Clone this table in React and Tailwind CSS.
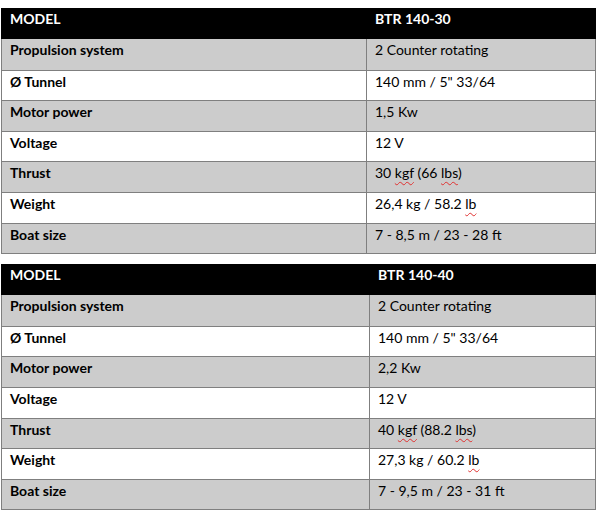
import React from 'react'

const Squiggle = ({ children }) => (
  <span className="underline decoration-wavy decoration-[#e0302f] decoration-1 underline-offset-[3px]">
    {children}
  </span>
)

const tables = [
  {
    model: 'BTR 140-30',
    col: 'grid-cols-[364px_1fr]',
    rows: [
      ['Propulsion system', '2 Counter rotating'],
      ['Ø Tunnel', '140 mm / 5" 33/64'],
      ['Motor power', '1,5 Kw'],
      ['Voltage', '12 V'],
      ['Thrust', <>30 <Squiggle>kgf</Squiggle> (66 <Squiggle>lbs</Squiggle>)</>],
      ['Weight', <>26,4 kg / 58.2 <Squiggle>lb</Squiggle></>],
      ['Boat size', '7 - 8,5 m / 23 - 28 ft']
    ]
  },
  {
    model: 'BTR 140-40',
    col: 'grid-cols-[367px_1fr]',
    rows: [
      ['Propulsion system', '2 Counter rotating'],
      ['Ø Tunnel', '140 mm / 5" 33/64'],
      ['Motor power', '2,2 Kw'],
      ['Voltage', '12 V'],
      ['Thrust', <>40 <Squiggle>kgf</Squiggle> (88.2 <Squiggle>lbs</Squiggle>)</>],
      ['Weight', <>27,3 kg / 60.2 <Squiggle>lb</Squiggle></>],
      ['Boat size', '7 - 9,5 m / 23 - 31 ft']
    ]
  }
]

const SpecTable = ({ model, col, rows }) => (
  <div className="ml-px w-[595px] text-[14px] leading-[17px]">
    <div className={`grid ${col} h-[31px] bg-black pl-px font-bold text-white`}>
      <div className="px-2 pt-[2px]">MODEL</div>
      <div className="px-2 pt-[2px] pl-[9px]">{model}</div>
    </div>
    <div className="border-x border-b border-[#7f7f7f]">
      {rows.map(([label, value], index) => (
        <div
          key={index}
          className={`grid ${col} h-[30.6px] text-black ${index > 0 ? 'border-t border-[#7f7f7f]' : ''} ${
            index % 2 === 0 ? 'bg-[#cccccc]' : 'bg-white'
          }`}>
          <div className="px-2 pt-[2px] font-bold">{label}</div>
          <div className="border-l border-[#7f7f7f] px-2 pt-[2px]">{value}</div>
        </div>
      ))}
    </div>
  </div>
)

export default function App() {
  return (
    <div className="flex h-[512px] w-[600px] flex-col gap-[10px] bg-white pt-2 font-['Lato',sans-serif]">
      {tables.map((table) => (
        <SpecTable key={table.model} {...table} />
      ))}
    </div>
  )
}
